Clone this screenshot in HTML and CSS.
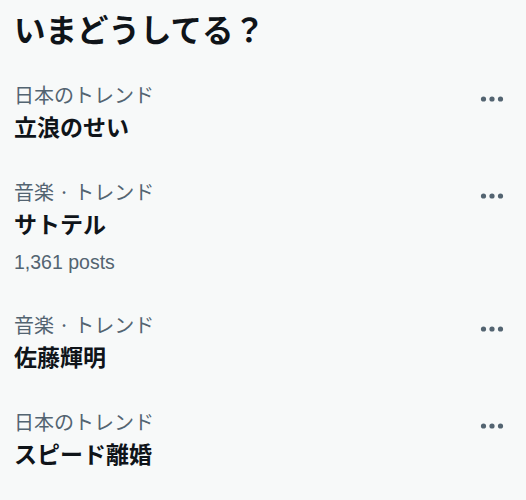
FILE: index.html
```html
<!DOCTYPE html>
<html lang="ja">
<head>
<meta charset="utf-8">
<link rel="stylesheet" href="styles.css">
</head>
<body>
<section class="panel">
  <h2 class="title">いまどうしてる？</h2>
  <div class="trend">
    <div class="info">
      <div class="cat">日本のトレンド</div>
      <div class="name">立浪のせい</div>
    </div>
    <div class="more"><svg viewBox="0 0 25 8" width="25" height="8"><circle cx="3.5" cy="4" r="2.6"/><circle cx="12" cy="4" r="2.6"/><circle cx="20.5" cy="4" r="2.6"/></svg></div>
  </div>
  <div class="trend">
    <div class="info">
      <div class="cat">音楽 · トレンド</div>
      <div class="name">サトテル</div>
      <div class="posts">1,361 posts</div>
    </div>
    <div class="more"><svg viewBox="0 0 25 8" width="25" height="8"><circle cx="3.5" cy="4" r="2.6"/><circle cx="12" cy="4" r="2.6"/><circle cx="20.5" cy="4" r="2.6"/></svg></div>
  </div>
  <div class="trend">
    <div class="info">
      <div class="cat">音楽 · トレンド</div>
      <div class="name">佐藤輝明</div>
    </div>
    <div class="more"><svg viewBox="0 0 25 8" width="25" height="8"><circle cx="3.5" cy="4" r="2.6"/><circle cx="12" cy="4" r="2.6"/><circle cx="20.5" cy="4" r="2.6"/></svg></div>
  </div>
  <div class="trend">
    <div class="info">
      <div class="cat">日本のトレンド</div>
      <div class="name">スピード離婚</div>
    </div>
    <div class="more"><svg viewBox="0 0 25 8" width="25" height="8"><circle cx="3.5" cy="4" r="2.6"/><circle cx="12" cy="4" r="2.6"/><circle cx="20.5" cy="4" r="2.6"/></svg></div>
  </div>
</section>
</body>
</html>
```
FILE: styles.css
```css
html, body {
  margin: 0;
  padding: 0;
  background: #f7f9f9;
}
body {
  font-family: "Liberation Sans", "Noto Sans CJK JP", sans-serif;
  color: #0f1419;
  width: 526px;
  height: 500px;
  overflow: hidden;
}
.panel {
  display: flex;
  flex-direction: column;
}
.title {
  margin: 0;
  padding: 8px 14px 0;
  height: 64px;
  box-sizing: border-box;
  font-size: 31.5px;
  line-height: 40px;
  font-weight: 700;
  font-family: "Noto Sans CJK JP", sans-serif;
}
.trend {
  display: flex;
  justify-content: space-between;
  padding: 17px 21px 17px 14px;
}
.info {
  display: flex;
  flex-direction: column;
}
.cat {
  font-family: "Noto Sans CJK JP", sans-serif;
  font-size: 20px;
  line-height: 27px;
  color: #536471;
}
.name {
  font-family: "Noto Sans CJK JP", sans-serif;
  font-size: 23px;
  line-height: 36px;
  font-weight: 700;
}
.posts {
  padding-top: 7px;
  font-size: 19.5px;
  line-height: 29px;
  color: #536471;
}
.more {
  padding-top: 14px;
}
.more svg {
  display: block;
  fill: #536471;
}
```
